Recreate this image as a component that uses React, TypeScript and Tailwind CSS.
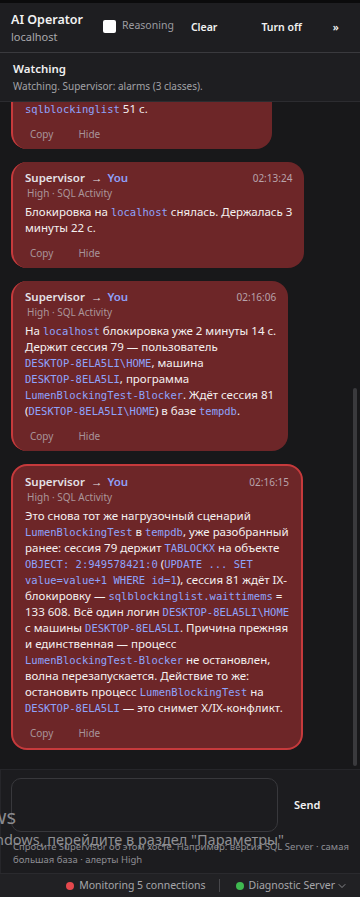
import { ChevronDown } from "lucide-react";
import type { ReactNode } from "react";

function C({ children }: { children: ReactNode }) {
  return <span className="font-['DejaVu_Sans_Mono',monospace] text-[10.5px] leading-3 text-[#8ea3fb]">{children}</span>;
}

function Card({ time, children, active }: { time: string; children: ReactNode; active?: boolean }) {
  return (
    <div
      className={
        active
          ? "w-fit max-w-[300px] rounded-2xl border-2 border-[#c63a3c] bg-[#6d2628] px-3 pt-2 pb-2"
          : "w-fit max-w-[300px] rounded-2xl border-l-2 border-[#c63a3c] bg-[#6d2628] px-3 pt-2 pb-2"
      }
    >
      <div className="flex items-center justify-between gap-6 leading-4">
        <div className="flex items-center text-[11.5px] font-semibold text-[#e4e1e6]">
          <span>Supervisor</span>
          <span className="ml-[6px] font-normal">→</span>
          <span className="ml-[5px] text-[#8e9ff7]">You</span>
        </div>
        <div className="text-[10px] text-[#b8a3ab]">{time}</div>
      </div>
      <div className="pl-[2px] text-[10px] leading-[14px] text-[#ab9599]">High · SQL Activity</div>
      <div className="mt-1 whitespace-nowrap text-[11.5px] leading-4 text-[#f4f0f0]">{children}</div>
      <div className="mt-[10px] flex gap-[25px] pl-[5px] text-[10px] leading-[14px] text-[#a8949a]">
        <span>Copy</span>
        <span>Hide</span>
      </div>
    </div>
  );
}

export default function App() {
  return (
    <div className="relative flex h-[897px] w-[360px] flex-col overflow-hidden bg-[#18181a] font-['Noto_Sans',sans-serif]">
      <div className="h-[3px] bg-[#0b0b0c]" />

      {/* Header */}
      <div className="flex h-[50px] items-center border-b border-[#3a3a3e] bg-[#1e1e21]">
        <div className="ml-[11px] w-[80px] whitespace-nowrap">
          <div className="text-[12.5px] font-semibold leading-[18px] text-[#f2f2f2]">AI Operator</div>
          <div className="text-[11px] leading-4 text-[#a8a8ac]">localhost</div>
        </div>
        <div className="-mt-[3px] ml-[12px] flex items-center">
          <div className="h-[13px] w-[13px] rounded-[2px] bg-white" />
          <span className="ml-[6px] text-[10.5px] text-[#9c9ca0]">Reasoning</span>
        </div>
        <span className="ml-[17px] text-[10.5px] font-semibold text-[#f2f2f2]">Clear</span>
        <span className="ml-[44px] text-[10.5px] font-semibold text-[#f2f2f2]">Turn off</span>
        <span className="ml-[31px] text-[10.5px] font-semibold text-[#f2f2f2]">»</span>
      </div>

      {/* Status */}
      <div className="flex h-[49px] flex-col justify-center border-b border-[#2c2c30] bg-[#1e1e21] px-[13px]">
        <div className="text-[11.5px] font-semibold leading-[18px] text-[#f0f0f0]">Watching</div>
        <div className="text-[10px] leading-4 text-[#a2a2a6]">Watching. Supervisor: alarms (3 classes).</div>
      </div>

      {/* Messages */}
      <div className="relative flex-1 overflow-hidden">
        <div className="-mt-[75px] flex flex-col gap-[13px] px-[11px]">
          <Card time="02:10:41">
            Сессия 79 держит блокировку на объекте.<br />
            Ожидающих сессий: 2, суммарно ждут<br />
            <C>sqlblockinglist</C> 51 с.
          </Card>
          <Card time="02:13:24">
            Блокировка на <C>localhost</C> снялась. Держалась 3<br />
            минуты 22 с.
          </Card>
          <Card time="02:16:06">
            На <C>localhost</C> блокировка уже 2 минуты 14 с.<br />
            Держит сессия 79 — пользователь<br />
            <C>DESKTOP-8ELA5LI\HOME</C>, машина<br />
            <C>DESKTOP-8ELA5LI</C>, программа<br />
            <C>LumenBlockingTest-Blocker</C>. Ждёт сессия 81<br />
            (<C>DESKTOP-8ELA5LI\HOME</C>) в базе <C>tempdb</C>.
          </Card>
          <Card time="02:16:15" active>
            Это снова тот же нагрузочный сценарий<br />
            <C>LumenBlockingTest</C> в <C>tempdb</C>, уже разобранный<br />
            ранее: сессия 79 держит <C>TABLOCKX</C> на объекте<br />
            <C>OBJECT: 2:949578421:0</C> (<C>UPDATE ... SET</C><br />
            <C>value=value+1 WHERE id=1</C>), сессия 81 ждёт IX-<br />
            блокировку — <C>sqlblockinglist.waittimems</C> =<br />
            133 608. Всё один логин <C>DESKTOP-8ELA5LI\HOME</C><br />
            с машины <C>DESKTOP-8ELA5LI</C>. Причина прежняя<br />
            и единственная — процесс<br />
            <C>LumenBlockingTest-Blocker</C> не остановлен,<br />
            волна перезапускается. Действие то же:<br />
            остановить процесс <C>LumenBlockingTest</C> на<br />
            <C>DESKTOP-8ELA5LI</C> — это снимет X/IX-конфликт.
          </Card>
        </div>
        {/* scrollbar */}
        <div className="absolute top-[286px] right-[3px] h-[378px] w-[4px] rounded-full bg-[#3a3a3d]" />
      </div>

      {/* Composer */}
      <div className="h-[104px] border-t border-l border-[#26262a] bg-[#1c1c1f] px-[10px] pt-[8px]">
        <div className="flex items-center">
          <div className="h-[54px] w-[267px] rounded-[10px] border border-[#38383c]" />
          <span className="ml-[16px] text-[11px] font-semibold text-[#f2f2f2]">Send</span>
        </div>
        <div className="mt-[8px] whitespace-nowrap pl-[2px] text-[9.5px] leading-[13px] text-[#8e8e94]">
          Спросите Supervisor об этом хосте. Например: версия SQL Server · самая<br />
          большая база · алерты High
        </div>
      </div>

      {/* Status bar */}
      <div className="flex h-[24px] items-center justify-end border-t border-[#2a2a2e] bg-[#212124] pr-[12px] text-[10.5px] text-[#a6a6aa]">
        <span className="h-[8px] w-[8px] rounded-full bg-[#e5484d]" />
        <span className="ml-[5px]">Monitoring 5 connections</span>
        <span className="ml-[13px] h-[13px] w-px bg-[#47474b]" />
        <span className="ml-[16px] h-[8px] w-[8px] rounded-full bg-[#3fb950]" />
        <span className="ml-[5px]">Diagnostic Server</span>
        <ChevronDown size={12} strokeWidth={1.5} className="ml-[1px] text-[#a6a6aa]" />
      </div>

      {/* Windows activation watermark */}
      <div className="pointer-events-none absolute top-[806px] right-[344px] whitespace-nowrap text-[20px] leading-[22px] text-[#8a8a8e]">
        Активация Windows
      </div>
      <div className="pointer-events-none absolute top-[830px] right-[76px] whitespace-nowrap text-[14.5px] leading-[18px] text-[#8f8f93]">
        Чтобы активировать Windows, перейдите в раздел "Параметры"
      </div>
    </div>
  );
}
